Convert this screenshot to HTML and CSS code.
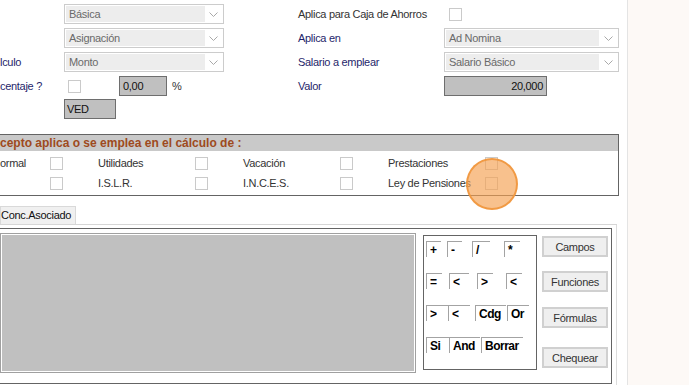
FILE: index.html
```html
<!DOCTYPE html>
<html>
<head>
  <title>Concepto</title>
  <link rel="stylesheet" href="styles.css">
</head>
<body>
  <div class="screen">
    <div class="form">
      <!-- datos del concepto -->
      <div class="fields">
        <div class="label"></div>
        <div class="cell">
          <div class="combo"><span class="combo-text">Básica</span><span class="combo-arrow"><svg width="9" height="5" viewBox="0 0 9 5"><path d="M0.5 0.5 L4.5 4.5 L8.5 0.5" fill="none" stroke="#a9a9a9"/></svg></span></div>
        </div>
        <div class="label plain">Aplica para Caja de Ahorros</div>
        <div class="cell"><span class="check check-right"></span></div>

        <div class="label"></div>
        <div class="cell">
          <div class="combo"><span class="combo-text">Asignación</span><span class="combo-arrow"><svg width="9" height="5" viewBox="0 0 9 5"><path d="M0.5 0.5 L4.5 4.5 L8.5 0.5" fill="none" stroke="#a9a9a9"/></svg></span></div>
        </div>
        <div class="label">Aplica en</div>
        <div class="cell">
          <div class="combo combo-wide"><span class="combo-text">Ad Nomina</span><span class="combo-arrow"><svg width="9" height="5" viewBox="0 0 9 5"><path d="M0.5 0.5 L4.5 4.5 L8.5 0.5" fill="none" stroke="#a9a9a9"/></svg></span></div>
        </div>

        <div class="label">lculo</div>
        <div class="cell">
          <div class="combo"><span class="combo-text">Monto</span><span class="combo-arrow"><svg width="9" height="5" viewBox="0 0 9 5"><path d="M0.5 0.5 L4.5 4.5 L8.5 0.5" fill="none" stroke="#a9a9a9"/></svg></span></div>
        </div>
        <div class="label">Salario a emplear</div>
        <div class="cell">
          <div class="combo combo-wide"><span class="combo-text">Salario Básico</span><span class="combo-arrow"><svg width="9" height="5" viewBox="0 0 9 5"><path d="M0.5 0.5 L4.5 4.5 L8.5 0.5" fill="none" stroke="#a9a9a9"/></svg></span></div>
        </div>

        <div class="label">centaje ?</div>
        <div class="cell">
          <span class="check check-left"></span>
          <span class="box box-pct">0,00</span>
          <span class="pct">%</span>
        </div>
        <div class="label">Valor</div>
        <div class="cell"><span class="box box-valor">20,000</span></div>

        <div class="label"></div>
        <div class="cell cell-up"><span class="box box-ved">VED</span></div>
      </div>

      <!-- aplica en el calculo de -->
      <div class="concept">
        <div class="concept-title">cepto aplica o se emplea en el cálculo de :</div>
        <div class="concept-grid">
          <span class="opt">ormal</span><span class="check"></span>
          <span class="opt">Utilidades</span><span class="check"></span>
          <span class="opt">Vacación</span><span class="check"></span>
          <span class="opt">Prestaciones</span><span class="check"></span>

          <span class="opt"></span><span class="check"></span>
          <span class="opt">I.S.L.R.</span><span class="check"></span>
          <span class="opt">I.N.C.E.S.</span><span class="check"></span>
          <span class="opt">Ley de Pensiones</span><span class="check"></span>
        </div>
      </div>

      <!-- pestaña de formula -->
      <div class="tabstrip">
        <div class="tab">Conc.Asociado</div>
      </div>
      <div class="tabpage">
        <div class="formula">
          <div class="editor"></div>
          <div class="keypad">
            <div class="keys keys-1">
              <span class="key">+</span><span class="key">-</span><span class="key">/</span><span class="key">*</span>
            </div>
            <div class="keys keys-2">
              <span class="key">=</span><span class="key">&lt;</span><span class="key">&gt;</span><span class="key">&lt;</span>
            </div>
            <div class="keys keys-3">
              <span class="key">&gt;</span><span class="key">&lt;</span><span class="key">Cdg</span><span class="key">Or</span>
            </div>
            <div class="keys keys-4">
              <span class="key">Si</span><span class="key">And</span><span class="key">Borrar</span>
            </div>
          </div>
          <div class="actions">
            <button class="btn btn-campos">Campos</button>
            <button class="btn btn-funciones">Funciones</button>
            <button class="btn btn-formulas">Fórmulas</button>
            <button class="btn btn-chequear">Chequear</button>
          </div>
        </div>
      </div>
    </div>
    <div class="side"></div>
  </div>
  <div class="click-mark"></div>
</body>
</html>
```

FILE: styles.css
```css
body {
  margin: 0;
  background-color: #ffffff;
  font-family: "Liberation Sans", Arial, sans-serif;
  font-size: 11px;
  letter-spacing: -0.3px;
  color: #222222;
  overflow: hidden;
}

.screen {
  display: flex;
  height: 385px;
}

.form {
  width: 627px;
  flex: none;
}

.side {
  flex: 1;
  background-color: #fdf9f6;
  border-left: 1px solid #e4e4e4;
}

/* campos superiores */

.fields {
  display: grid;
  grid-template-columns: 64px 234px 146px 175px;
  grid-auto-rows: 20px;
  row-gap: 4px;
  padding-top: 4px;
}

.label {
  display: flex;
  align-items: center;
  color: #1f1f6b;
}

.label.plain {
  color: #333333;
}

.cell {
  display: flex;
  align-items: center;
}

.cell-up {
  margin-top: -2px;
}

.combo {
  box-sizing: border-box;
  width: 160px;
  height: 20px;
  display: flex;
  padding: 1px;
  border: 1px solid #cccccc;
  background-color: #ffffff;
}

.combo-wide {
  width: 175px;
}

.combo-text {
  width: 139px;
  padding-left: 3px;
  box-sizing: border-box;
  background-color: #ededed;
  color: #6a6a6a;
  line-height: 16px;
}

.combo-wide .combo-text {
  width: 153px;
}

.combo-arrow {
  flex: 1;
  display: flex;
  align-items: center;
  justify-content: center;
}

.check {
  box-sizing: border-box;
  width: 13px;
  height: 13px;
  border: 1px solid #cacaca;
  background-color: #ffffff;
}

.check-right {
  margin-left: 5px;
}

.check-left {
  margin-left: 4px;
}

.box {
  box-sizing: border-box;
  height: 20px;
  border: 1px solid #6e6e6e;
  background-color: #c0c0c0;
  color: #111111;
  line-height: 18px;
  padding: 0 3px;
}

.box-pct {
  width: 48px;
  margin-left: 38px;
}

.pct {
  margin-left: 5px;
  color: #333333;
}

.box-valor {
  width: 103px;
  text-align: right;
}

.box-ved {
  width: 52px;
  padding-left: 2px;
}

/* aplica en el calculo */

.concept {
  width: 619px;
  box-sizing: border-box;
  margin-top: 14px;
  border-top: 1px solid #646464;
  border-right: 1px solid #646464;
  border-bottom: 1px solid #646464;
  padding-bottom: 2px;
}

.concept-title {
  height: 16px;
  line-height: 16px;
  background-color: #c9c9c9;
  color: #9e4a20;
  font-size: 12px;
  font-weight: bold;
  letter-spacing: 0;
}

.concept-grid {
  display: grid;
  grid-template-columns: 50px 48px 97px 48px 97px 48px 97px 48px;
  grid-auto-rows: 20px;
  align-items: center;
  padding-top: 2px;
}

.opt {
  color: #333333;
}

/* pestaña */

.tabstrip {
  width: 617px;
  margin-top: 10px;
  border-bottom: 1px solid #d6d6d6;
  display: flex;
}

.tab {
  width: 76px;
  height: 18px;
  box-sizing: border-box;
  border: 1px solid #d9d9d9;
  border-bottom: none;
  background-color: #f0f0f0;
  color: #111111;
  line-height: 17px;
}

.tabpage {
  width: 617px;
  height: 160px;
  box-sizing: border-box;
  padding-top: 3px;
  border-right: 1px solid #dcdcdc;
}

.formula {
  width: 612px;
  height: 156px;
  box-sizing: border-box;
  border-top: 1px solid #646464;
  border-right: 1px solid #646464;
  border-bottom: 1px solid #646464;
  display: flex;
  align-items: flex-start;
  padding-top: 4px;
}

.editor {
  width: 416px;
  height: 140px;
  box-sizing: border-box;
  border: 1px solid #a0a0a0;
  box-shadow: inset 0 0 0 1px #ffffff;
  background-color: #c0c0c0;
}

.keypad {
  width: 114px;
  height: 135px;
  box-sizing: border-box;
  margin-left: 7px;
  margin-top: 2px;
  border: 1px solid #646464;
  background-color: #ffffff;
  display: flex;
  flex-direction: column;
  gap: 16px;
  padding-top: 5px;
}

.keys {
  display: grid;
  height: 16px;
}

.keys-1 {
  grid-template-columns: 2px 15px 6px 15px 10px 18px 14px 16px;
}

.keys-2 {
  grid-template-columns: 2px 16px 7px 20px 8px 16px 13px 16px;
}

.keys-3 {
  grid-template-columns: 2px 22px 0 22px 5px 31px 1px 22px;
}

.keys-4 {
  grid-template-columns: 2px 23px 0 31px 1px 42px;
}

.keys .key:nth-child(1) { grid-column: 2; }
.keys .key:nth-child(2) { grid-column: 4; }
.keys .key:nth-child(3) { grid-column: 6; }
.keys .key:nth-child(4) { grid-column: 8; }

.key {
  height: 16px;
  box-sizing: border-box;
  border-top: 1px solid #a3a3a3;
  border-left: 1px solid #a3a3a3;
  padding-left: 3px;
  font-size: 12px;
  font-weight: bold;
  letter-spacing: -0.5px;
  line-height: 16px;
  color: #000000;
  white-space: nowrap;
}

.actions {
  display: flex;
  flex-direction: column;
  margin-left: 5px;
  margin-top: 3px;
}

.btn {
  width: 66px;
  height: 21px;
  box-sizing: border-box;
  padding: 0;
  border: 2px solid #d0d0d0;
  background-color: #efefef;
  color: #333333;
  font-family: "Liberation Sans", Arial, sans-serif;
  font-size: 11px;
  letter-spacing: -0.3px;
}

.btn-funciones {
  margin-top: 14px;
}

.btn-formulas {
  margin-top: 15px;
}

.btn-chequear {
  margin-top: 19px;
}

/* marca del clic */

.click-mark {
  position: absolute;
  left: 466px;
  top: 158px;
  width: 52px;
  height: 52px;
  box-sizing: border-box;
  border-radius: 50%;
  border: 2px solid rgba(240, 150, 60, 0.9);
  background-color: rgba(245, 160, 80, 0.65);
}
```
